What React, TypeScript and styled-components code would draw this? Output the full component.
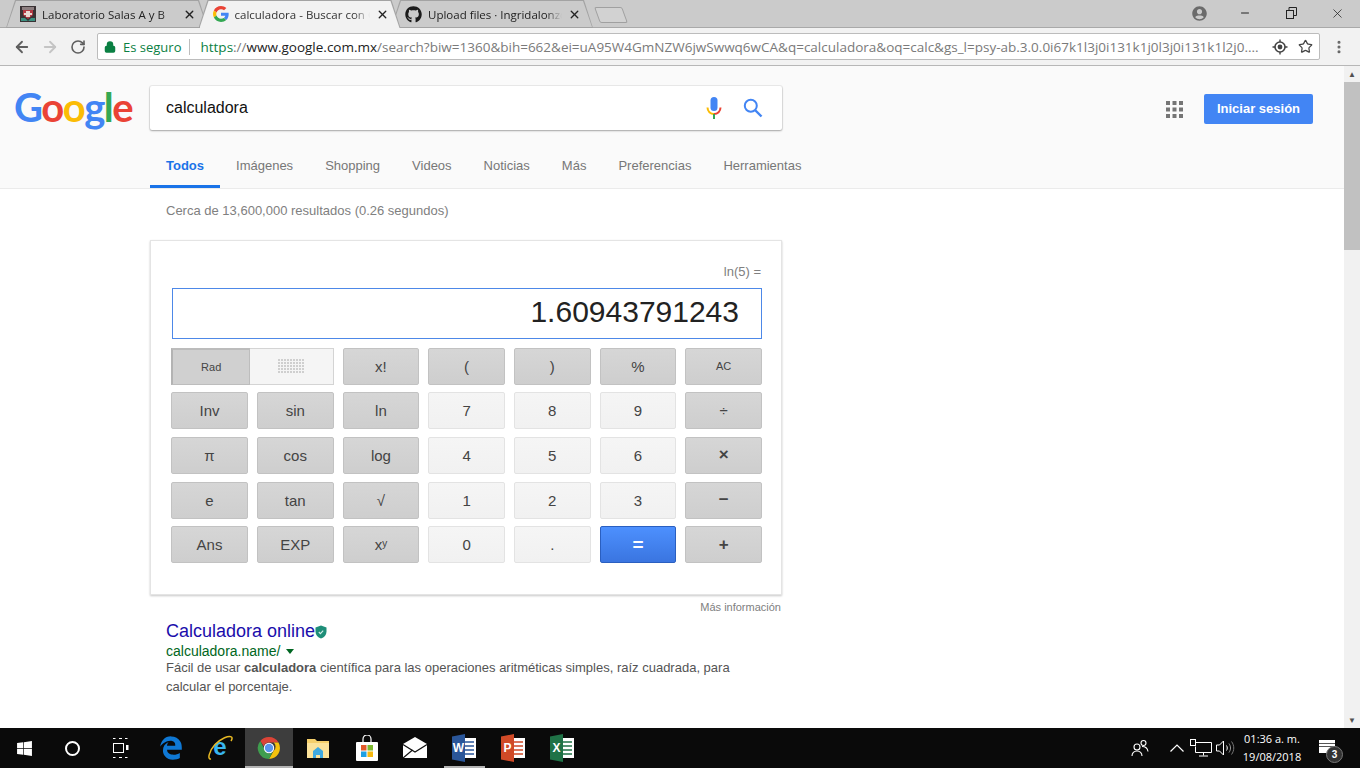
import styled, { createGlobalStyle } from 'styled-components'
import { ArrowLeft, ArrowRight, RotateCw, Lock, Star, MoreVertical, Minus, X } from 'lucide-react'
import { FaGithub, FaWindows, FaUserCircle } from 'react-icons/fa'
import { FaEdgeLegacy } from 'react-icons/fa6'

// ─── Data ─────────────────────────────────────────────────────────────────────

type Tone = 'dark' | 'light' | 'blue'

interface CalcKey {
  label: string
  tone: Tone
  small?: boolean
  op?: boolean
}

const d = (label: string, small = false): CalcKey => ({ label, tone: 'dark', small })
const l = (label: string): CalcKey => ({ label, tone: 'light' })
const op = (label: string): CalcKey => ({ label, tone: 'dark', op: true })

const TOP_KEYS: CalcKey[] = [d('x!'), d('('), d(')'), d('%'), d('AC', true)]

const KEYS: CalcKey[] = [
  d('Inv'), d('sin'), d('ln'), l('7'), l('8'), l('9'), d('÷'),
  d('π'), d('cos'), d('log'), l('4'), l('5'), l('6'), op('×'),
  d('e'), d('tan'), d('√'), l('1'), l('2'), l('3'), op('−'),
  d('Ans'), d('EXP'), d('xʸ'), l('0'), l('.'), { label: '=', tone: 'blue' }, op('+'),
]

const NAV = ['Todos', 'Imágenes', 'Shopping', 'Videos', 'Noticias', 'Más', 'Preferencias', 'Herramientas']

// ─── Drawings ─────────────────────────────────────────────────────────────────

function GoogleG() {
  return (
    <svg width="16" height="16" viewBox="0 0 48 48">
      <path fill="#EA4335" d="M24 9.5c3.5 0 6.7 1.2 9.2 3.6l6.9-6.9C35.9 2.4 30.5 0 24 0 14.6 0 6.5 5.4 2.6 13.2l8 6.2C12.5 13.7 17.8 9.5 24 9.5z" />
      <path fill="#4285F4" d="M47 24.5c0-1.6-.1-3.1-.4-4.5H24v9h13c-.6 3-2.2 5.5-4.8 7.2l7.7 6C44.4 37.9 47 31.8 47 24.5z" />
      <path fill="#FBBC05" d="M10.5 28.6c-.5-1.4-.8-3-.8-4.6s.3-3.2.8-4.6l-8-6.2C.9 16.5 0 20.1 0 24s.9 7.5 2.6 10.8l7.9-6.2z" />
      <path fill="#34A853" d="M24 48c6.5 0 11.9-2.1 15.9-5.8l-7.7-6c-2.2 1.4-4.9 2.3-8.2 2.3-6.2 0-11.5-4.2-13.4-9.9l-8 6.2C6.5 42.6 14.6 48 24 48z" />
    </svg>
  )
}

function LabFavicon() {
  return (
    <svg width="16" height="16" viewBox="0 0 16 16">
      <rect width="16" height="16" fill="#3a3234" />
      <rect x="2" y="1" width="12" height="3" fill="#8d7f80" />
      <path d="M3 4h10v5l-5 4-5-4z" fill="#b23a44" />
      <path d="M6 5h4v2h2v2h-2v2H6V9H4V7h2z" fill="#e8d8d2" />
      <path d="M1 12h4l3 3 3-3h4v3H1z" fill="#3c8f80" />
    </svg>
  )
}

function TargetIcon() {
  return (
    <svg width="16" height="16" viewBox="0 0 16 16" fill="none">
      <circle cx="8" cy="8" r="5" stroke="#444" strokeWidth="1.6" />
      <circle cx="8" cy="8" r="2.4" fill="#444" />
      <path d="M8 .5V3M8 13v2.5M.5 8H3M13 8h2.5" stroke="#444" strokeWidth="1.4" />
    </svg>
  )
}

function RestoreIcon() {
  return (
    <svg width="11" height="12" viewBox="0 0 11 12" fill="none" stroke="#222">
      <rect x="0.5" y="3.5" width="7" height="8" />
      <path d="M3 3.5V.5h7.500v8H7.500" />
    </svg>
  )
}

function ColorMic() {
  return (
    <svg width="16" height="24" viewBox="0 0 16 24" fill="none">
      <rect x="4.5" y="1" width="7" height="14" rx="3.5" fill="#4285f4" />
      <path d="M1.5 11.5c0 3.8 2.9 6.5 6.5 6.5" stroke="#fbbc05" strokeWidth="2" />
      <path d="M8 18c3.6 0 6.500-2.700 6.500-6.500" stroke="#ea4335" strokeWidth="2" />
      <path d="M8 18v5" stroke="#34a853" strokeWidth="2" />
    </svg>
  )
}

function SearchGlass() {
  return (
    <svg width="20" height="20" viewBox="0 0 20 20" fill="none" stroke="#4285f4" strokeWidth="2">
      <circle cx="7.8" cy="7.8" r="6" />
      <path d="M12 12l6.5 6.5" strokeWidth="2.4" />
    </svg>
  )
}

function AppsGrid() {
  const cells = [0, 6.5, 13]
  return (
    <svg width="17" height="17" viewBox="0 0 17 17" fill="#757575">
      {cells.flatMap((y) => cells.map((x) => <rect key={`${x}-${y}`} x={x} y={y} width="4" height="4" />))}
    </svg>
  )
}

function DotsPad() {
  const xs = [0, 3, 6, 9, 12, 15, 18, 21, 24]
  const ys = [0, 3, 6, 9, 12]
  return (
    <svg width="26" height="15" viewBox="0 0 26 15" fill="#cfcfcf">
      {ys.flatMap((y) => xs.map((x) => <rect key={`${x}-${y}`} x={x} y={y} width="2" height="2" />))}
    </svg>
  )
}

function Shield() {
  return (
    <svg width="12" height="14" viewBox="0 0 12 14">
      <path d="M6 .5l5.5 2v4.2c0 3.3-2.3 5.6-5.5 6.8C2.8 12.3.5 10 .5 6.7V2.500z" fill="#1e8e78" />
      <path d="M3.8 7l1.6 1.6 2.8-3" fill="none" stroke="#d6f0ea" strokeWidth="1.1" />
    </svg>
  )
}

function IeIcon() {
  return (
    <svg width="26" height="26" viewBox="0 0 26 26">
      <text x="13" y="20" textAnchor="middle" fontSize="24" fontWeight="700" fontFamily="Liberation Sans, sans-serif" fill="#38b6f0">
        e
      </text>
      <path d="M4 24C0 25 2 16 8 9.5 14 3.5 22 0 24.5 2c1 1 .5 2.5-.5 4" fill="none" stroke="#e8b923" strokeWidth="1.5" />
    </svg>
  )
}

function Chrome() {
  return (
    <svg width="24" height="24" viewBox="0 0 24 24">
      <path d="M12 1a11 11 0 0 1 9.5 5.5H12a5.5 5.5 0 0 0-5.2 3.7L3.3 5A11 11 0 0 1 12 1z" fill="#db4437" />
      <path d="M21.5 6.5A11 11 0 0 1 12 23l4.7-8.200a5.500 5.500 0 0 0 0-8.300z" fill="#f4c20d" />
      <path d="M12 23A11 11 0 0 1 3.3 5l4.7 9.600a5.500 5.500 0 0 0 4.600 2.900L16 15z" fill="#3f9d4e" />
      <circle cx="12" cy="12" r="5.2" fill="#fff" />
      <circle cx="12" cy="12" r="4.2" fill="#5a95ee" />
    </svg>
  )
}

function Folder() {
  return (
    <svg width="24" height="24" viewBox="0 0 24 24">
      <path d="M1 3h8l2 2h12v17H1z" fill="#f5cf6b" />
      <path d="M1 7h22v15H1z" fill="#fbe29a" />
      <path d="M7 15l5-4 5 4v7h-3v-3h-4v3H7z" fill="#3fa9e0" />
    </svg>
  )
}

function Store() {
  return (
    <svg width="24" height="26" viewBox="0 0 24 26">
      <path d="M8 7V4a4 4 0 0 1 8 0v3" fill="none" stroke="#fff" strokeWidth="1.2" />
      <rect x="1" y="7" width="22" height="19" rx="1" fill="#fff" />
      <rect x="6" y="10" width="5.5" height="5.5" fill="#e25a2b" />
      <rect x="12.5" y="10" width="5.5" height="5.5" fill="#7cb82f" />
      <rect x="6" y="16.5" width="5.5" height="5.5" fill="#1fa0e3" />
      <rect x="12.5" y="16.5" width="5.5" height="5.5" fill="#f6b80f" />
    </svg>
  )
}

function Mail() {
  return (
    <svg width="24" height="24" viewBox="0 0 24 24">
      <path d="M0 8l12-7 12 7v14H0z" fill="#fff" />
      <path d="M0 8.5l12 7.5 12-7.5" fill="none" stroke="#111" strokeWidth="1.2" />
      <path d="M0 22l9.5-8" stroke="#111" strokeWidth="1.2" />
    </svg>
  )
}

function OfficeIcon({ letter, dark }: { letter: string; dark: string }) {
  return (
    <svg width="24" height="28" viewBox="0 0 24 28">
      <rect x="10" y="4" width="14" height="20" fill="#fff" />
      <path d="M13 8h9M13 12h9M13 16h9M13 20h9" stroke={dark} strokeWidth="1.3" />
      <path d="M0 2.5L13 0v28L0 25.5z" fill={dark} />
      <text x="6.5" y="18" textAnchor="middle" fontSize="12" fontWeight="700" fontFamily="Liberation Sans, sans-serif" fill="#fff">
        {letter}
      </text>
    </svg>
  )
}

function People() {
  return (
    <svg width="18" height="18" viewBox="0 0 18 18" fill="none" stroke="#fff" strokeWidth="1.1">
      <circle cx="6" cy="8" r="3" />
      <path d="M1 17c0-3 2-5 5-5s5 2 5 5" />
      <circle cx="12.5" cy="4" r="2.5" />
      <path d="M11 7.5c3 0 5.5 1.5 6 5" />
    </svg>
  )
}

function Chevron() {
  return (
    <svg width="14" height="8" viewBox="0 0 14 8" fill="none" stroke="#fff" strokeWidth="1.2">
      <path d="M.5 7.5L7 1l6.5 6.5" />
    </svg>
  )
}

function Network() {
  return (
    <svg width="22" height="18" viewBox="0 0 22 18" fill="none" stroke="#fff" strokeWidth="1">
      <path d="M6 3.5h15.5v10H5.5v-6" />
      <rect x="0.5" y="0.5" width="5" height="6" />
      <path d="M13.5 13.5v3M9 17h9" />
    </svg>
  )
}

function Speaker() {
  return (
    <svg width="20" height="18" viewBox="0 0 20 18" fill="none" stroke="#fff" strokeWidth="1">
      <path d="M.5 6h3l4-4v14l-4-4h-3z" />
      <path d="M10.5 6.5c1 1.5 1 3.5 0 5" />
      <path d="M13 4.5c2 3 2 6 0 9" stroke="#999" />
      <path d="M15.5 2.5c3 4 3 9 0 13" stroke="#777" />
    </svg>
  )
}

// ─── Component ────────────────────────────────────────────────────────────────

export default function App() {
  return (
    <Screen>
      <GlobalStyle />

      <TabStrip>
        <Tab>
          <LabFavicon />
          <TabTitle>Laboratorio Salas A y B</TabTitle>
          <TabClose><X size={13} strokeWidth={2.5} /></TabClose>
        </Tab>
        <Tab $active>
          <GoogleG />
          <TabTitle>calculadora - Buscar con Google</TabTitle>
          <TabClose><X size={13} strokeWidth={2.5} /></TabClose>
        </Tab>
        <Tab>
          <FaGithub size={17} color="#1b1b1b" />
          <TabTitle>Upload files · Ingridalonzo/calculadora</TabTitle>
          <TabClose><X size={13} strokeWidth={2.5} /></TabClose>
        </Tab>
        <NewTab />
        <WindowControls>
          <WindowButton><FaUserCircle size={15} color="#6b6b6b" /></WindowButton>
          <WindowButton><Minus size={12} color="#222" /></WindowButton>
          <WindowButton><RestoreIcon /></WindowButton>
          <WindowButton><X size={15} strokeWidth={1.2} color="#222" /></WindowButton>
        </WindowControls>
      </TabStrip>

      <Toolbar>
        <ToolButton><ArrowLeft size={18} strokeWidth={2.4} color="#5f5f5f" /></ToolButton>
        <ToolButton><ArrowRight size={18} strokeWidth={2.4} color="#c4c4c4" /></ToolButton>
        <ToolButton><RotateCw size={16} strokeWidth={2.4} color="#5f5f5f" /></ToolButton>
        <Omnibox>
          <Lock size={12} strokeWidth={3} color="#0b8043" fill="#0b8043" />
          <Secure>Es seguro</Secure>
          <OmniDivider />
          <Url>
            <UrlScheme>https</UrlScheme>://<UrlHost>www.google.com.mx</UrlHost>
            /search?biw=1360&bih=662&ei=uA95W4GmNZW6jwSwwq6wCA&q=calculadora&oq=calc&gs_l=psy-ab.3.0.0i67k1l3j0i131k1j0l3j0i131k1l2j0....
          </Url>
          <OmniIcons>
            <TargetIcon />
            <Star size={15} strokeWidth={2} color="#444" />
          </OmniIcons>
        </Omnibox>
        <MenuButton><MoreVertical size={16} strokeWidth={2.6} color="#666" /></MenuButton>
      </Toolbar>

      <Viewport>
        <Page>
          <Header>
            <TopRow>
              <Logo>
                <Letter $c="#4285f4">G</Letter>
                <Letter $c="#ea4335">o</Letter>
                <Letter $c="#fbbc05">o</Letter>
                <Letter $c="#4285f4">g</Letter>
                <Letter $c="#34a853">l</Letter>
                <Letter $c="#ea4335">e</Letter>
              </Logo>
              <SearchBox>
                <SearchText>calculadora</SearchText>
                <ColorMic />
                <SearchGlass />
              </SearchBox>
              <HeaderRight>
                <AppsGrid />
                <SignIn>Iniciar sesión</SignIn>
              </HeaderRight>
            </TopRow>
            <Nav>
              {NAV.map((item, i) => (
                <NavItem key={item} $active={i === 0}>{item}</NavItem>
              ))}
            </Nav>
          </Header>

          <Results>
            <Stats>Cerca de 13,600,000 resultados (0.26 segundos)</Stats>
            <Card>
              <Expression>ln(5) =</Expression>
              <Display>1.60943791243</Display>
              <Keypad>
                <ModeToggle>
                  <RadKey>Rad</RadKey>
                  <PadKey><DotsPad /></PadKey>
                </ModeToggle>
                {TOP_KEYS.concat(KEYS).map((key, i) => (
                  <Key key={i} $tone={key.tone} $small={key.small} $op={key.op}>{key.label}</Key>
                ))}
              </Keypad>
            </Card>
            <MoreInfo>Más información</MoreInfo>
            <Result>
              <ResultTitle>
                <a>Calculadora online</a>
                <Shield />
              </ResultTitle>
              <ResultUrl>calculadora.name/<Caret /></ResultUrl>
              <ResultText>
                Fácil de usar <b>calculadora</b> científica para las operaciones aritméticas simples, raíz cuadrada, para calcular el porcentaje.
              </ResultText>
            </Result>
          </Results>
        </Page>

        <Scrollbar>
          <ScrollArrow>▲</ScrollArrow>
          <ScrollThumb />
          <ScrollTrack />
          <ScrollArrow>▼</ScrollArrow>
        </Scrollbar>
      </Viewport>

      <Taskbar>
        <SystemSlot><FaWindows size={17} color="#fff" /></SystemSlot>
        <SystemSlot><Cortana /></SystemSlot>
        <SystemSlot>
          <svg width="17" height="20" viewBox="0 0 17 20" fill="none" stroke="#fff">
            <path d="M1 .5h2.5M7 .5h3M13 .5h2.5M1 19.5h2.5M7 19.5h3M13 19.5h2.5" />
            <rect x="1.5" y="5.5" width="10" height="9" />
            <rect x="14" y="7" width="2.5" height="5" fill="#fff" stroke="none" />
          </svg>
        </SystemSlot>
        <PinnedApps>
          <TaskSlot><FaEdgeLegacy size={24} color="#0f78d4" /></TaskSlot>
          <TaskSlot><IeIcon /></TaskSlot>
          <TaskSlot $current><Chrome /></TaskSlot>
          <TaskSlot><Folder /></TaskSlot>
          <TaskSlot><Store /></TaskSlot>
          <TaskSlot><Mail /></TaskSlot>
          <TaskSlot $running><OfficeIcon letter="W" dark="#2a5699" /></TaskSlot>
          <TaskSlot><OfficeIcon letter="P" dark="#d04a27" /></TaskSlot>
          <TaskSlot><OfficeIcon letter="X" dark="#1f7246" /></TaskSlot>
        </PinnedApps>
        <Tray>
          <TrayIcon $left={0}><People /></TrayIcon>
          <TrayIcon $left={21}><Chevron /></TrayIcon>
          <TrayIcon $left={6}><Network /></TrayIcon>
          <TrayIcon $left={4}><Speaker /></TrayIcon>
          <Clock>
            <span>01:36 a. m.</span>
            <span>19/08/2018</span>
          </Clock>
          <Notice>
            <NoticeBubble />
            <NoticeBadge>3</NoticeBadge>
          </Notice>
        </Tray>
      </Taskbar>
    </Screen>
  )
}

// ─── Styles ───────────────────────────────────────────────────────────────────

const GlobalStyle = createGlobalStyle`
  html, body {
    margin: 0;
    height: 100%;
    overflow: hidden;
  }

  * {
    box-sizing: border-box;
  }
`

const Screen = styled.div`
  width: 1360px;
  height: 768px;
  display: flex;
  flex-direction: column;
  overflow: hidden;
  font-family: 'Liberation Sans', Arial, sans-serif;
`

const TabStrip = styled.div`
  height: 28px;
  flex-shrink: 0;
  display: flex;
  align-items: flex-end;
  padding-left: 6px;
  background: #cbcbcb;
  box-shadow: inset 0 -1px 0 #a9a9a9;
`

const Tab = styled.div<{ $active?: boolean }>`
  position: relative;
  z-index: ${({ $active }) => ($active ? 2 : 1)};
  width: 202px;
  height: 28px;
  margin-right: -9.5px;
  display: flex;
  align-items: center;
  gap: 6px;
  padding: 0 12px 0 14px;
  clip-path: polygon(0 100%, 9px 0, calc(100% - 9px) 0, 100% 100%);
  background: #a3a3a3;
  color: ${({ $active }) => ($active ? '#333' : '#222')};

  &::before {
    content: '';
    position: absolute;
    inset: 1px 1px ${({ $active }) => ($active ? '0' : '1px')} 1px;
    clip-path: polygon(0 100%, 9px 0, calc(100% - 9px) 0, 100% 100%);
    background: ${({ $active }) => ($active ? '#f2f2f2' : '#cbcbcb')};
    z-index: -1;
  }

  svg {
    flex-shrink: 0;
  }
`

const TabTitle = styled.span`
  flex: 1;
  min-width: 0;
  overflow: hidden;
  white-space: nowrap;
  font-family: 'Open Sans', sans-serif;
  font-size: 11.5px;
  -webkit-mask-image: linear-gradient(to right, #000 88%, transparent);
  mask-image: linear-gradient(to right, #000 88%, transparent);
`

const TabClose = styled.span`
  display: flex;
  color: #222;
`

const NewTab = styled.div`
  width: 28px;
  height: 16px;
  margin: 0 0 5px 13px;
  border: 1px solid #a0a0a0;
  border-radius: 2px;
  background: #d2d2d2;
  transform: skewX(20deg);
  align-self: flex-end;
`

const WindowControls = styled.div`
  margin-left: auto;
  height: 28px;
  display: flex;
  align-items: flex-start;
`

const WindowButton = styled.div`
  width: 46px;
  height: 26px;
  display: flex;
  align-items: center;
  justify-content: center;
`

const Toolbar = styled.div`
  height: 38px;
  flex-shrink: 0;
  display: flex;
  align-items: center;
  padding: 0 0 0 8px;
  background: #f2f2f2;
  border-bottom: 1px solid #b7b7b7;
`

const ToolButton = styled.div`
  width: 28px;
  height: 28px;
  display: flex;
  align-items: center;
  justify-content: center;
`

const Omnibox = styled.div`
  width: 1223px;
  height: 27px;
  margin-left: 5px;
  display: flex;
  align-items: center;
  padding: 0 6px;
  background: #fff;
  border: 1px solid #bcbcbc;
  border-radius: 2px;
  font-family: 'Open Sans', sans-serif;
  font-size: 13px;
  white-space: nowrap;
`

const Secure = styled.span`
  margin-left: 7px;
  color: #0b8043;
`

const OmniDivider = styled.span`
  width: 1px;
  height: 16px;
  margin: 0 10px 0 8px;
  background: #bdbdbd;
`

const Url = styled.div`
  flex: 1;
  min-width: 0;
  overflow: hidden;
  font-size: 13.5px;
  color: #7a7a7a;
`

const UrlScheme = styled.span`
  color: #0b8043;
`

const UrlHost = styled.span`
  color: #222;
`

const OmniIcons = styled.div`
  display: flex;
  align-items: center;
  gap: 10px;
  margin-left: 10px;
`

const MenuButton = styled.div`
  flex: 1;
  display: flex;
  justify-content: center;
  padding-right: 2px;
`

const Viewport = styled.div`
  flex: 1;
  min-height: 0;
  display: flex;
`

const Page = styled.div`
  flex: 1;
  min-width: 0;
  overflow: hidden;
  background: #fff;
`

const Header = styled.header`
  height: 123px;
  background: #fafafa;
  border-bottom: 1px solid #ebebeb;
`

const TopRow = styled.div`
  height: 64px;
  display: flex;
  padding-top: 20px;
`

const Logo = styled.div`
  width: 150px;
  padding-left: 14px;
  margin-top: -3px;
  font-family: Lato, sans-serif;
  font-weight: 700;
  font-size: 40px;
  line-height: 48px;
  letter-spacing: -1.5px;
  white-space: nowrap;
`

const Letter = styled.span<{ $c: string }>`
  color: ${({ $c }) => $c};
`

const SearchBox = styled.div`
  width: 632px;
  height: 44px;
  display: flex;
  align-items: center;
  gap: 21px;
  padding: 0 19px 0 16px;
  background: #fff;
  border-radius: 2px;
  box-shadow: 0 1px 2px rgba(0, 0, 0, 0.3), 0 0 0 1px rgba(0, 0, 0, 0.06);
`

const SearchText = styled.span`
  flex: 1;
  font-size: 16px;
  color: #111;
`

const HeaderRight = styled.div`
  flex: 1;
  height: 44px;
  display: flex;
  align-items: center;
  justify-content: flex-end;
  gap: 21px;
  padding: 2px 31px 0 0;
`

const SignIn = styled.div`
  width: 109px;
  height: 30px;
  display: flex;
  align-items: center;
  justify-content: center;
  padding-bottom: 2px;
  background: #4285f4;
  border-radius: 2px;
  color: #fff;
  font-size: 13px;
  font-weight: 700;
`

const Nav = styled.nav`
  height: 58px;
  display: flex;
  align-items: flex-end;
  padding-left: 150px;
`

const NavItem = styled.div<{ $active?: boolean }>`
  height: 41px;
  padding: 11px 16px 0;
  font-size: 13px;
  line-height: 16px;
  font-weight: ${({ $active }) => ($active ? 700 : 400)};
  color: ${({ $active }) => ($active ? '#1a73e8' : '#777')};
  border-bottom: 3px solid ${({ $active }) => ($active ? '#1a73e8' : 'transparent')};
`

const Results = styled.main`
  width: 632px;
  margin-left: 150px;
`

const Stats = styled.div`
  height: 51px;
  padding: 14px 0 0 16px;
  font-size: 13px;
  line-height: 16px;
  color: #808080;
`

const Card = styled.section`
  height: 355px;
  padding: 24px 19px 0 20.2px;
  background: #fff;
  border: 1px solid #e4e4e4;
  box-shadow: 0 1px 2px rgba(0, 0, 0, 0.22);
`

const Expression = styled.div`
  height: 23px;
  padding-right: 1px;
  text-align: right;
  font-size: 13px;
  line-height: 14px;
  color: #808080;
`

const Display = styled.div`
  height: 51px;
  margin: 0 0 8.8px 0.8px;
  padding-right: 22px;
  text-align: right;
  border: 1px solid #4d88e8;
  font-size: 30px;
  line-height: 45px;
  color: #222;
`

const Keypad = styled.div`
  display: grid;
  grid-template-columns: repeat(7, 1fr);
  grid-auto-rows: 37px;
  column-gap: 9px;
  row-gap: 7.6px;
`

const ModeToggle = styled.div`
  grid-column: span 2;
  display: flex;
`

const RadKey = styled.div`
  width: 79px;
  display: flex;
  align-items: center;
  justify-content: center;
  background: #d0d0d0;
  border: 1px solid #bdbdbd;
  border-left: 2px solid #b3b3b3;
  border-top: 2px solid #bcbcbc;
  font-size: 11px;
  color: #444;
`

const PadKey = styled.div`
  flex: 1;
  display: flex;
  align-items: center;
  justify-content: center;
  background: #f5f5f5;
  border: 1px solid #d4d4d4;
  border-left: none;
`

const Key = styled.div<{ $tone: Tone; $small?: boolean; $op?: boolean }>`
  display: flex;
  align-items: center;
  justify-content: center;
  border-radius: 2px;
  font-size: ${({ $small, $op, $tone }) => ($small ? '11px' : $tone === 'blue' ? '19px' : $op ? '17px' : '15px')};
  font-weight: ${({ $tone, $op }) => ($tone === 'blue' || $op ? 700 : 400)};
  color: ${({ $tone }) => ($tone === 'blue' ? '#fff' : '#444')};
  background: ${({ $tone }) =>
    $tone === 'blue'
      ? 'linear-gradient(#4d90fe, #3a75e0)'
      : $tone === 'light'
        ? 'linear-gradient(#f5f5f5, #f1f1f1)'
        : 'linear-gradient(#d6d6d6, #cecece)'};
  border: 1px solid
    ${({ $tone }) => ($tone === 'blue' ? '#2a5fc0' : $tone === 'light' ? '#e3e3e3' : '#c2c2c2')};
`

const MoreInfo = styled.div`
  height: 24px;
  padding: 6px 1px 0 0;
  text-align: right;
  font-size: 11px;
  line-height: 13px;
  color: #808080;
`

const Result = styled.article`
  padding: 2px 0 0 16px;
  width: 592px;
`

const ResultTitle = styled.div`
  display: flex;
  align-items: center;
  height: 21px;
  font-size: 18px;
  line-height: 21px;
  color: #1a0dab;

  svg {
    margin-top: 1px;
  }
`

const ResultUrl = styled.div`
  display: flex;
  align-items: center;
  height: 17px;
  font-size: 14px;
  color: #006621;
`

const Caret = styled.span`
  width: 0;
  height: 0;
  margin: 2px 0 0 6px;
  border-left: 4px solid transparent;
  border-right: 4px solid transparent;
  border-top: 5px solid #006621;
`

const ResultText = styled.div`
  font-size: 13px;
  line-height: 18.6px;
  color: #545454;

  b {
    color: #545454;
  }
`

const Scrollbar = styled.div`
  width: 16px;
  flex-shrink: 0;
  display: flex;
  flex-direction: column;
  background: #f1f1f1;
`

const ScrollArrow = styled.div`
  height: 16px;
  display: flex;
  align-items: center;
  justify-content: center;
  font-size: 8px;
  color: #505050;
`

const ScrollThumb = styled.div`
  height: 168px;
  background: #c1c1c1;
`

const ScrollTrack = styled.div`
  flex: 1;
`

const Taskbar = styled.footer`
  height: 40px;
  flex-shrink: 0;
  display: flex;
  background: #0a0a0a;
`

const SystemSlot = styled.div`
  width: 48px;
  display: flex;
  align-items: center;
  justify-content: center;
`

const PinnedApps = styled.div`
  display: flex;
  margin-left: 3px;
`

const TaskSlot = styled.div<{ $current?: boolean; $running?: boolean }>`
  position: relative;
  width: 48.8px;
  display: flex;
  align-items: center;
  justify-content: center;
  background: ${({ $current }) => ($current ? '#3d3d3d' : 'transparent')};

  &::after {
    content: '';
    position: absolute;
    left: ${({ $current }) => ($current ? '0' : '4px')};
    right: ${({ $current }) => ($current ? '0' : '4px')};
    bottom: 0;
    height: 2px;
    background: ${({ $current, $running }) => ($current || $running ? '#b4b4b4' : 'transparent')};
  }
`

const Cortana = styled.span`
  width: 15px;
  height: 15px;
  border: 2px solid #fff;
  border-radius: 50%;
`

const Tray = styled.div`
  margin-left: auto;
  display: flex;
  align-items: center;
  color: #fff;
`

const TrayIcon = styled.div<{ $left: number }>`
  display: flex;
  margin-left: ${({ $left }) => $left}px;
`

const Clock = styled.div`
  width: 72px;
  display: flex;
  flex-direction: column;
  align-items: center;
  gap: 4px;
  font-family: 'Open Sans', sans-serif;
  font-size: 11px;
  line-height: 14px;
`

const Notice = styled.div`
  position: relative;
  width: 52px;
  height: 40px;
`

const NoticeBubble = styled.span`
  position: absolute;
  left: 11px;
  top: 12px;
  width: 16px;
  height: 13px;
  background: linear-gradient(
    #fff 0 3px,
    #555 3px 4px,
    #fff 4px 6px,
    #555 6px 7px,
    #fff 7px
  );
`

const NoticeBadge = styled.span`
  position: absolute;
  left: 18px;
  top: 18px;
  width: 17px;
  height: 17px;
  display: flex;
  align-items: center;
  justify-content: center;
  border-radius: 50%;
  background: #333;
  border: 1px solid #777;
  font-size: 10px;
  font-weight: 700;
  color: #fff;
`
